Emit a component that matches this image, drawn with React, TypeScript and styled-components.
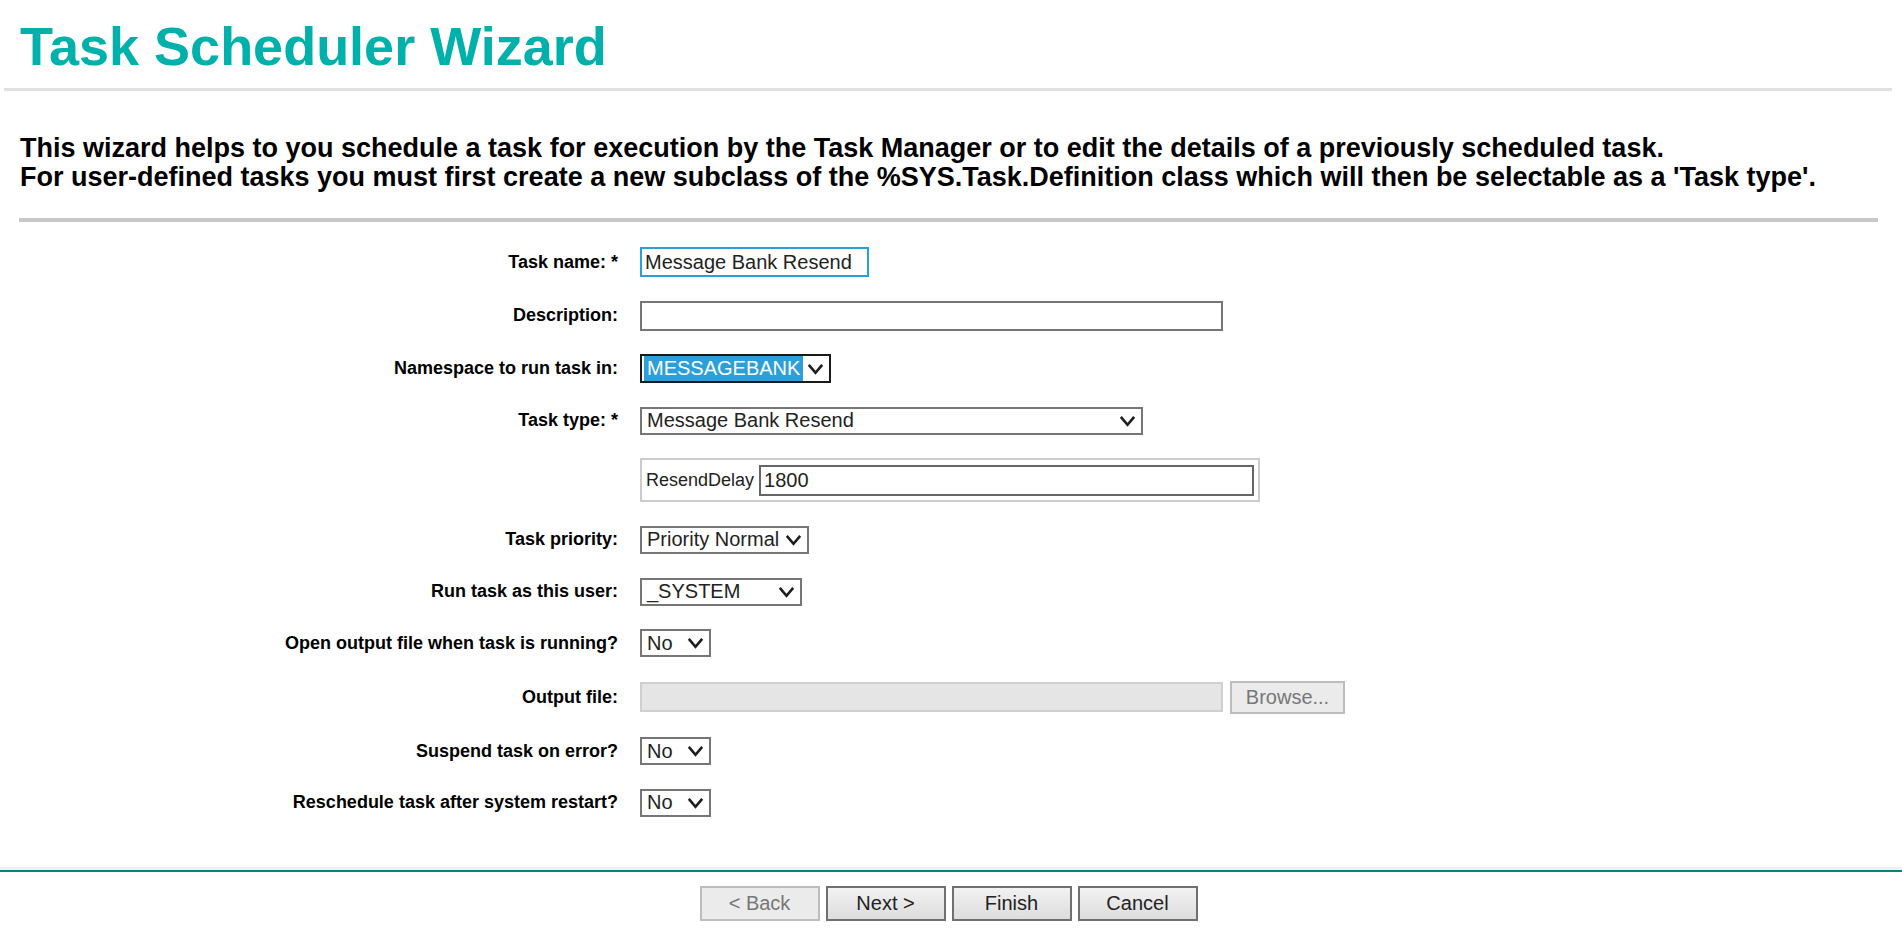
import React from 'react';
import styled, { createGlobalStyle } from 'styled-components';

const GlobalStyle = createGlobalStyle`
    html, body {
        margin: 0;
        padding: 0;
        background: #ffffff;
    }
    body {
        font-family: 'Liberation Sans', Arial, sans-serif;
        color: #000;
    }
`;

const Page = styled.div`
    height: 100vh;
    display: flex;
    flex-direction: column;
    overflow: hidden;
`;

const Content = styled.div`
    flex: 1;
`;

const Title = styled.h1`
    margin: 0;
    padding: 15px 0 0 20px;
    font-size: 54px;
    line-height: 62px;
    font-weight: bold;
    color: #00b0aa;
`;

const HeaderRule = styled.div`
    margin: 11px 10px 0 4px;
    height: 3px;
    background: #e0e0e0;
`;

const Intro = styled.p`
    margin: 43px 0 0 0;
    padding-left: 20px;
    font-size: 27px;
    font-weight: bold;
    line-height: 29px;
`;

const IntroRule = styled.div`
    margin: 26px 24px 0 19px;
    height: 4px;
    background: #c8c8c8;
`;

const Form = styled.div`
    display: grid;
    grid-template-columns: 618px max-content;
    column-gap: 22px;
    row-gap: 23.6px;
    align-items: center;
    margin-top: 25px;
`;

const Label = styled.div`
    justify-self: end;
    font-size: 18px;
    font-weight: bold;
    white-space: nowrap;
`;

const Field = styled.div`
    display: flex;
    align-items: center;
    gap: 7px;
`;

const TextInput = styled.div<{ $width: number; $focused?: boolean; $disabled?: boolean }>`
    box-sizing: border-box;
    width: ${(p) => p.$width}px;
    height: 30px;
    padding: 0 3px;
    display: flex;
    align-items: center;
    font-size: 20px;
    color: #222;
    background: ${(p) => (p.$disabled ? '#e5e5e5' : '#fff')};
    border: 2px solid
        ${(p) => (p.$focused ? '#2b9fd9' : p.$disabled ? '#cfcfcf' : '#767676')};
    white-space: nowrap;
`;

const SelectBox = styled.div<{ $width: number; $height?: number; $focused?: boolean }>`
    box-sizing: border-box;
    width: ${(p) => p.$width}px;
    height: ${(p) => p.$height || 28}px;
    padding: 0 5px 0 2px;
    display: flex;
    align-items: center;
    justify-content: space-between;
    font-size: 20px;
    color: #222;
    background: #fff;
    border: 2px solid ${(p) => (p.$focused ? '#1a1a1a' : '#767676')};
    white-space: nowrap;
`;

const SelectText = styled.span<{ $selected?: boolean }>`
    padding: 1px 3px;
    background: ${(p) => (p.$selected ? '#2b9fd9' : 'transparent')};
    color: ${(p) => (p.$selected ? '#fff' : '#222')};
`;

const ParamBox = styled.div`
    box-sizing: border-box;
    width: 620px;
    height: 44px;
    padding: 0 4px;
    display: flex;
    align-items: center;
    gap: 5px;
    border: 2px solid #cccccc;
    font-size: 18px;
    color: #222;
`;

const ParamInput = styled.div`
    box-sizing: border-box;
    flex: 1;
    height: 31px;
    padding: 0 3px;
    display: flex;
    align-items: center;
    font-size: 20px;
    border: 2px solid #666;
`;

const Button = styled.button<{ $disabled?: boolean; $width?: number; $height?: number }>`
    box-sizing: border-box;
    width: ${(p) => p.$width || 120}px;
    height: ${(p) => p.$height || 35}px;
    padding: 0;
    font-family: 'Liberation Sans', Arial, sans-serif;
    font-size: 20px;
    color: ${(p) => (p.$disabled ? '#777' : '#222')};
    border: 2px solid ${(p) => (p.$disabled ? '#bdbdbd' : '#707070')};
    background: ${(p) =>
        p.$disabled ? '#ebebeb' : 'linear-gradient(#f2f2f2, #dddddd)'};
    cursor: ${(p) => (p.$disabled ? 'default' : 'pointer')};
`;

const Footer = styled.div`
    height: 72px;
    box-sizing: border-box;
    border-top: 2px solid #00857e;
    box-shadow: 0 -3px 0 #f0f0f4;
    padding: 14px 5px 0 0;
    display: flex;
    justify-content: center;
    gap: 6px;
`;

const Chevron = () => (
    <svg width="17" height="12" viewBox="0 0 17 12">
        <polyline
            points="1.8,1.8 8.5,9.8 15.2,1.8"
            fill="none"
            stroke="#1e1e1e"
            strokeWidth="2.6"
        />
    </svg>
);

const Select: React.FC<{
    value: string;
    width: number;
    height?: number;
    focused?: boolean;
}> = ({ value, width, height, focused }) => (
    <SelectBox $width={width} $height={height} $focused={focused}>
        <SelectText $selected={focused}>{value}</SelectText>
        <Chevron />
    </SelectBox>
);

const App: React.FC = () => {
    return (
        <Page>
            <GlobalStyle />
            <Content>
                <Title>Task Scheduler Wizard</Title>
                <HeaderRule />
                <Intro>
                    This wizard helps to you schedule a task for execution by the Task
                    Manager or to edit the details of a previously scheduled task.
                    <br />
                    For user-defined tasks you must first create a new subclass of the
                    %SYS.Task.Definition class which will then be selectable as a 'Task
                    type'.
                </Intro>
                <IntroRule />
                <Form>
                    <Label>Task name: *</Label>
                    <Field>
                        <TextInput $width={229} $focused>
                            Message Bank Resend
                        </TextInput>
                    </Field>

                    <Label>Description:</Label>
                    <Field>
                        <TextInput $width={583} />
                    </Field>

                    <Label>Namespace to run task in:</Label>
                    <Field>
                        <Select value="MESSAGEBANK" width={191} height={29} focused />
                    </Field>

                    <Label>Task type: *</Label>
                    <Field>
                        <Select value="Message Bank Resend" width={503} />
                    </Field>

                    <div />
                    <Field>
                        <ParamBox>
                            ResendDelay
                            <ParamInput>1800</ParamInput>
                        </ParamBox>
                    </Field>

                    <Label>Task priority:</Label>
                    <Field>
                        <Select value="Priority Normal" width={169} />
                    </Field>

                    <Label>Run task as this user:</Label>
                    <Field>
                        <Select value="_SYSTEM" width={162} />
                    </Field>

                    <Label>Open output file when task is running?</Label>
                    <Field>
                        <Select value="No" width={71} />
                    </Field>

                    <Label>Output file:</Label>
                    <Field>
                        <TextInput $width={583} $disabled />
                        <Button $disabled $width={115} $height={33}>
                            Browse...
                        </Button>
                    </Field>

                    <Label>Suspend task on error?</Label>
                    <Field>
                        <Select value="No" width={71} />
                    </Field>

                    <Label>Reschedule task after system restart?</Label>
                    <Field>
                        <Select value="No" width={71} />
                    </Field>
                </Form>
            </Content>
            <Footer>
                <Button $disabled>&lt; Back</Button>
                <Button>Next &gt;</Button>
                <Button>Finish</Button>
                <Button>Cancel</Button>
            </Footer>
        </Page>
    );
};

export default App;
